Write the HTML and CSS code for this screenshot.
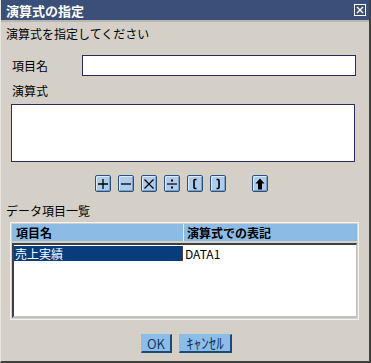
FILE: index.html
```html
<!DOCTYPE html>
<html lang="ja">
<head>
    <meta charset="UTF-8">
    <title>演算式の指定</title>
    <link rel="stylesheet" href="styles.css">
</head>
<body>
    <div class="dialog">
        <div class="titlebar">
            <span>演算式の指定</span>
            <svg class="close" width="12" height="12" viewBox="0 0 12 12">
                <rect x="0.5" y="0.5" width="11" height="11" fill="none" stroke="#fff"/>
                <path d="M3 3 L9 9 M9 3 L3 9" stroke="#fff" stroke-width="1.4"/>
            </svg>
        </div>
        <div class="content">
            <div class="lead">演算式を指定してください</div>

            <div class="field-row">
                <label for="itemName">項目名</label>
                <input type="text" id="itemName">
            </div>

            <div class="label">演算式</div>
            <textarea id="formula"></textarea>

            <div class="ops">
                <button class="op" title="+">
                    <svg width="12" height="12" viewBox="0 0 12 12"><path d="M6 1 V11 M1 6 H11" stroke="#000" stroke-width="1.3"/></svg>
                </button>
                <button class="op" title="-">
                    <svg width="12" height="12" viewBox="0 0 12 12"><path d="M1 6 H11" stroke="#000" stroke-width="1.3"/></svg>
                </button>
                <button class="op" title="*">
                    <svg width="12" height="12" viewBox="0 0 12 12"><path d="M1.5 1.5 L10.5 10.5 M10.5 1.5 L1.5 10.5" stroke="#000" stroke-width="1.3"/></svg>
                </button>
                <button class="op" title="/">
                    <svg width="12" height="12" viewBox="0 0 12 12"><path d="M1 6 H11" stroke="#000" stroke-width="1.2"/><rect x="5" y="1.5" width="2" height="2" fill="#000"/><rect x="5" y="8.5" width="2" height="2" fill="#000"/></svg>
                </button>
                <button class="op" title="(">
                    <svg width="12" height="12" viewBox="0 0 12 12"><path d="M7.5 1.5 H6 Q5 1.5 5 2.5 V9.5 Q5 10.5 6 10.5 H7.5" fill="none" stroke="#000" stroke-width="1.6"/></svg>
                </button>
                <button class="op" title=")">
                    <svg width="12" height="12" viewBox="0 0 12 12"><path d="M4.5 1.5 H6 Q7 1.5 7 2.5 V9.5 Q7 10.5 6 10.5 H4.5" fill="none" stroke="#000" stroke-width="1.6"/></svg>
                </button>
                <button class="op op-up" title="up">
                    <svg width="12" height="12" viewBox="0 0 12 12"><path d="M6 0.5 L10.5 5.5 H8 V11.5 H4 V5.5 H1.5 Z" fill="#000"/></svg>
                </button>
            </div>

            <div class="label list-label">データ項目一覧</div>
            <div class="table">
                <div class="thead">
                    <div class="th">項目名</div>
                    <div class="th">演算式での表記</div>
                </div>
                <div class="tbody">
                    <div class="tr">
                        <div class="td selected">売上実績</div>
                        <div class="td">DATA1</div>
                    </div>
                </div>
            </div>

            <div class="actions">
                <button class="btn btn-ok">OK</button>
                <button class="btn btn-cancel">ｷｬﾝｾﾙ</button>
            </div>
        </div>
    </div>
</body>
</html>
```

FILE: styles.css
```css
body {
    margin: 0;
    font-family: "Noto Sans CJK JP", "DejaVu Sans", sans-serif;
    font-size: 12px;
    color: #000;
    background: #d4d0c8;
}

.dialog {
    width: 371px;
    height: 363px;
    box-sizing: border-box;
    background: #d4d0c8;
    border-left: 1px solid #e8e6e0;
    border-right: 2px solid #404040;
    border-bottom: 2px solid #404040;
    display: flex;
    flex-direction: column;
}

.titlebar {
    height: 22px;
    flex: none;
    background: #3a5079;
    color: #fff;
    font-weight: bold;
    font-size: 13px;
    display: flex;
    align-items: center;
    justify-content: space-between;
    padding: 0 3px 0 5px;
    border-bottom: 2px solid #b8b6b0;
    box-sizing: border-box;
}

.close {
    display: block;
}

.content {
    padding: 0 0 0 5px;
    display: flex;
    flex-direction: column;
}

.lead {
    margin-top: 5px;
    line-height: 14px;
}

.field-row {
    margin-top: 14px;
    display: flex;
    align-items: center;
}

.field-row label {
    width: 70px;
    padding-left: 6px;
}

.field-row input {
    width: 274px;
    height: 21px;
    box-sizing: border-box;
    border: 1px solid #2b2b5e;
    background: #fff;
    padding: 0 3px;
    font: inherit;
}

.label {
    margin-top: 8px;
    padding-left: 6px;
    line-height: 14px;
}

textarea {
    margin: 6px 0 0 5px;
    width: 344px;
    height: 58px;
    box-sizing: border-box;
    border: 1px solid #2b2b5e;
    resize: none;
    font: inherit;
}

.ops {
    margin-top: 13px;
    display: flex;
    gap: 7px;
    padding-left: 89px;
}

.op {
    width: 16px;
    height: 17px;
    padding: 0;
    border: 1px solid #2e5276;
    border-radius: 2px;
    background: #aecdee;
    box-shadow: inset 1px 1px 0 #dcebfa, inset -1px -1px 0 #7a9ec4;
    display: flex;
    align-items: center;
    justify-content: center;
}

.op svg {
    display: block;
}

.op-up {
    margin-left: 19px;
}

.list-label {
    margin-top: 12px;
    padding-left: 0;
}

.table {
    margin: 4px 0 0 4px;
    width: 349px;
    height: 98px;
    box-sizing: border-box;
    border: 1px solid #f4f4f0;
    padding: 1px;
    display: flex;
    flex-direction: column;
}

.thead {
    display: grid;
    grid-template-columns: 171px 1fr;
    background: #8cbbe6;
    height: 17px;
    flex: none;
}

.th {
    font-weight: bold;
    line-height: 17px;
    padding-left: 4px;
}

.th + .th {
    border-left: 1px solid #e6eef6;
    padding-left: 3px;
}

.tbody {
    margin-top: 2px;
    flex: 1;
    background: #fff;
    border-top: 2px solid #404040;
    border-left: 2px solid #404040;
    border-right: 1px solid #c0c0c0;
    border-bottom: 2px solid #c0c0c0;
}

.tr {
    display: grid;
    grid-template-columns: 168px 1fr;
    height: 15px;
    margin-top: 1px;
}

.td {
    line-height: 15px;
    padding-left: 2px;
}

.td + .td {
    border-left: 1px solid #404040;
    padding-left: 2px;
}

.td.selected {
    background: #073d7d;
    color: #fff;
    padding-left: 1px;
}

.actions {
    margin-top: 14px;
    display: flex;
    justify-content: center;
    gap: 7px;
    padding-right: 2px;
}

.btn {
    height: 19px;
    padding: 0;
    background: #8cbde9;
    color: #173a60;
    font: inherit;
    border: 1px solid #8cbde9;
    border-right: 2px solid #1c4a78;
    border-bottom: 2px solid #1c4a78;
    box-sizing: border-box;
    line-height: 15px;
}

.btn-ok {
    width: 31px;
    font-size: 13px;
}

.btn-cancel {
    width: 53px;
    font-size: 15px;
    line-height: 14px;
}
```
